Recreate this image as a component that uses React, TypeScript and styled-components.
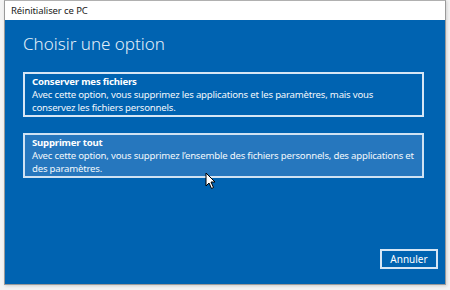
import React from "react";
import styled, { createGlobalStyle } from "styled-components";

const Global = createGlobalStyle`
  html, body { margin: 0; padding: 0; background: #f3f3f3; }
  body { font-family: "Noto Sans", "Open Sans", sans-serif; }
`;

const Page = styled.div`
  width: 450px;
  height: 290px;
  box-sizing: border-box;
  padding: 0 4px 5px 4px;
  display: flex;
`;

const Window = styled.div`
  flex: 1;
  display: flex;
  flex-direction: column;
  border: 1px solid #9a9a9a;
  border-top-color: #b0b0b0;
  background: #0063b1;
  box-shadow: 1px 1px 3px rgba(0,0,0,0.15);
`;

const TitleBar = styled.div`
  height: 19px;
  background: #ffffff;
  display: flex;
  align-items: center;
  padding-left: 6px;
  font-size: 9.5px;
  letter-spacing: -0.1px;
  color: #1a1a1a;
`;

const Body = styled.div`
  position: relative;
  flex: 1;
  display: flex;
  flex-direction: column;
  padding: 12px 0 0 18px;
  color: #ffffff;
`;

const Heading = styled.h1`
  margin: 0 0 16px 0;
  font-size: 17px;
  font-weight: 300;
  color: #e3eef8;
  line-height: 24px;
`;

const Option = styled.div<{ $hover?: boolean }>`
  width: 401px;
  box-sizing: border-box;
  border: 2px solid ${(p) => (p.$hover ? "#cfe2f3" : "#d6e6f5")};
  background: ${(p) => (p.$hover ? "#2677be" : "transparent")};
  padding: 1px 4px 1px 7px;
  margin-bottom: 16px;
  font-size: 9.6px;
  line-height: 13px;
  letter-spacing: -0.2px;
`;

const OptionTitle = styled.div`
  font-weight: 700;
`;

const OptionText = styled.div`
  color: #f2f7fc;
`;

const Footer = styled.div`
  margin-top: auto;
  display: flex;
  justify-content: flex-end;
  padding: 0 7px 15px 0;
`;

const Button = styled.button`
  width: 58px;
  height: 20px;
  border: 2px solid #d6e6f5;
  background: transparent;
  color: #ffffff;
  font-family: inherit;
  font-size: 10px;
  padding: 0;
`;

const Cursor = styled.svg`
  position: absolute;
  left: 200px;
  top: 152px;
`;

export default function App() {
  return (
    <>
      <Global />
      <Page>
        <Window>
          <TitleBar>Réinitialiser ce PC</TitleBar>
          <Body>
            <Heading>Choisir une option</Heading>
            <Option>
              <OptionTitle>Conserver mes fichiers</OptionTitle>
              <OptionText>
                Avec cette option, vous supprimez les applications et les paramètres, mais vous
                conservez les fichiers personnels.
              </OptionText>
            </Option>
            <Option $hover>
              <OptionTitle>Supprimer tout</OptionTitle>
              <OptionText>
                Avec cette option, vous supprimez l’ensemble des fichiers personnels, des applications et
                des paramètres.
              </OptionText>
            </Option>
            <Footer>
              <Button>Annuler</Button>
            </Footer>
            <Cursor width="12" height="18" viewBox="0 0 12 18">
              <path d="M1 1 L1 14 L4 11 L6.5 16.5 L8.5 15.5 L6 10 L10 10 Z" fill="#ffffff" stroke="#000000" strokeWidth="1" strokeLinejoin="round" />
            </Cursor>
          </Body>
        </Window>
      </Page>
    </>
  );
}
